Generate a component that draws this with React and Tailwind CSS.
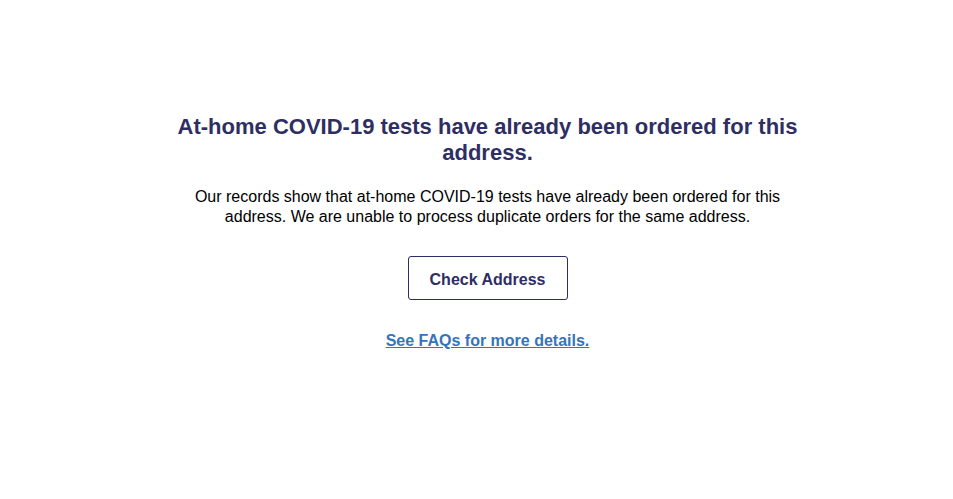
export default function App() {
  return (
    <div className="min-h-[499px] bg-white pl-[22px] font-['Liberation_Sans',Arial,sans-serif]">
      <main className="mx-auto flex max-w-[660px] flex-col items-center px-4 pt-[114px] text-center">
        <h1 className="text-[22px] font-bold leading-[26px] text-[#2e2e63]">
          At-home COVID-19 tests have already been ordered for this address.
        </h1>
        <p className="mt-[21px] max-w-[600px] text-[16px] leading-[20px] text-black">
          Our records show that at-home COVID-19 tests have already been ordered for this address. We are unable to process duplicate orders for the same address.
        </p>
        <button
          type="button"
          className="mt-[29px] h-[44px] w-[160px] rounded-[3px] border border-[#2e2e63] bg-white pt-[3px] text-[16px] font-bold text-[#2e2e63]"
        >
          Check Address
        </button>
        <a href="#" className="mt-[29px] text-[16px] font-bold text-[#3674b9] underline">
          See FAQs for more details.
        </a>
      </main>
    </div>
  );
}
